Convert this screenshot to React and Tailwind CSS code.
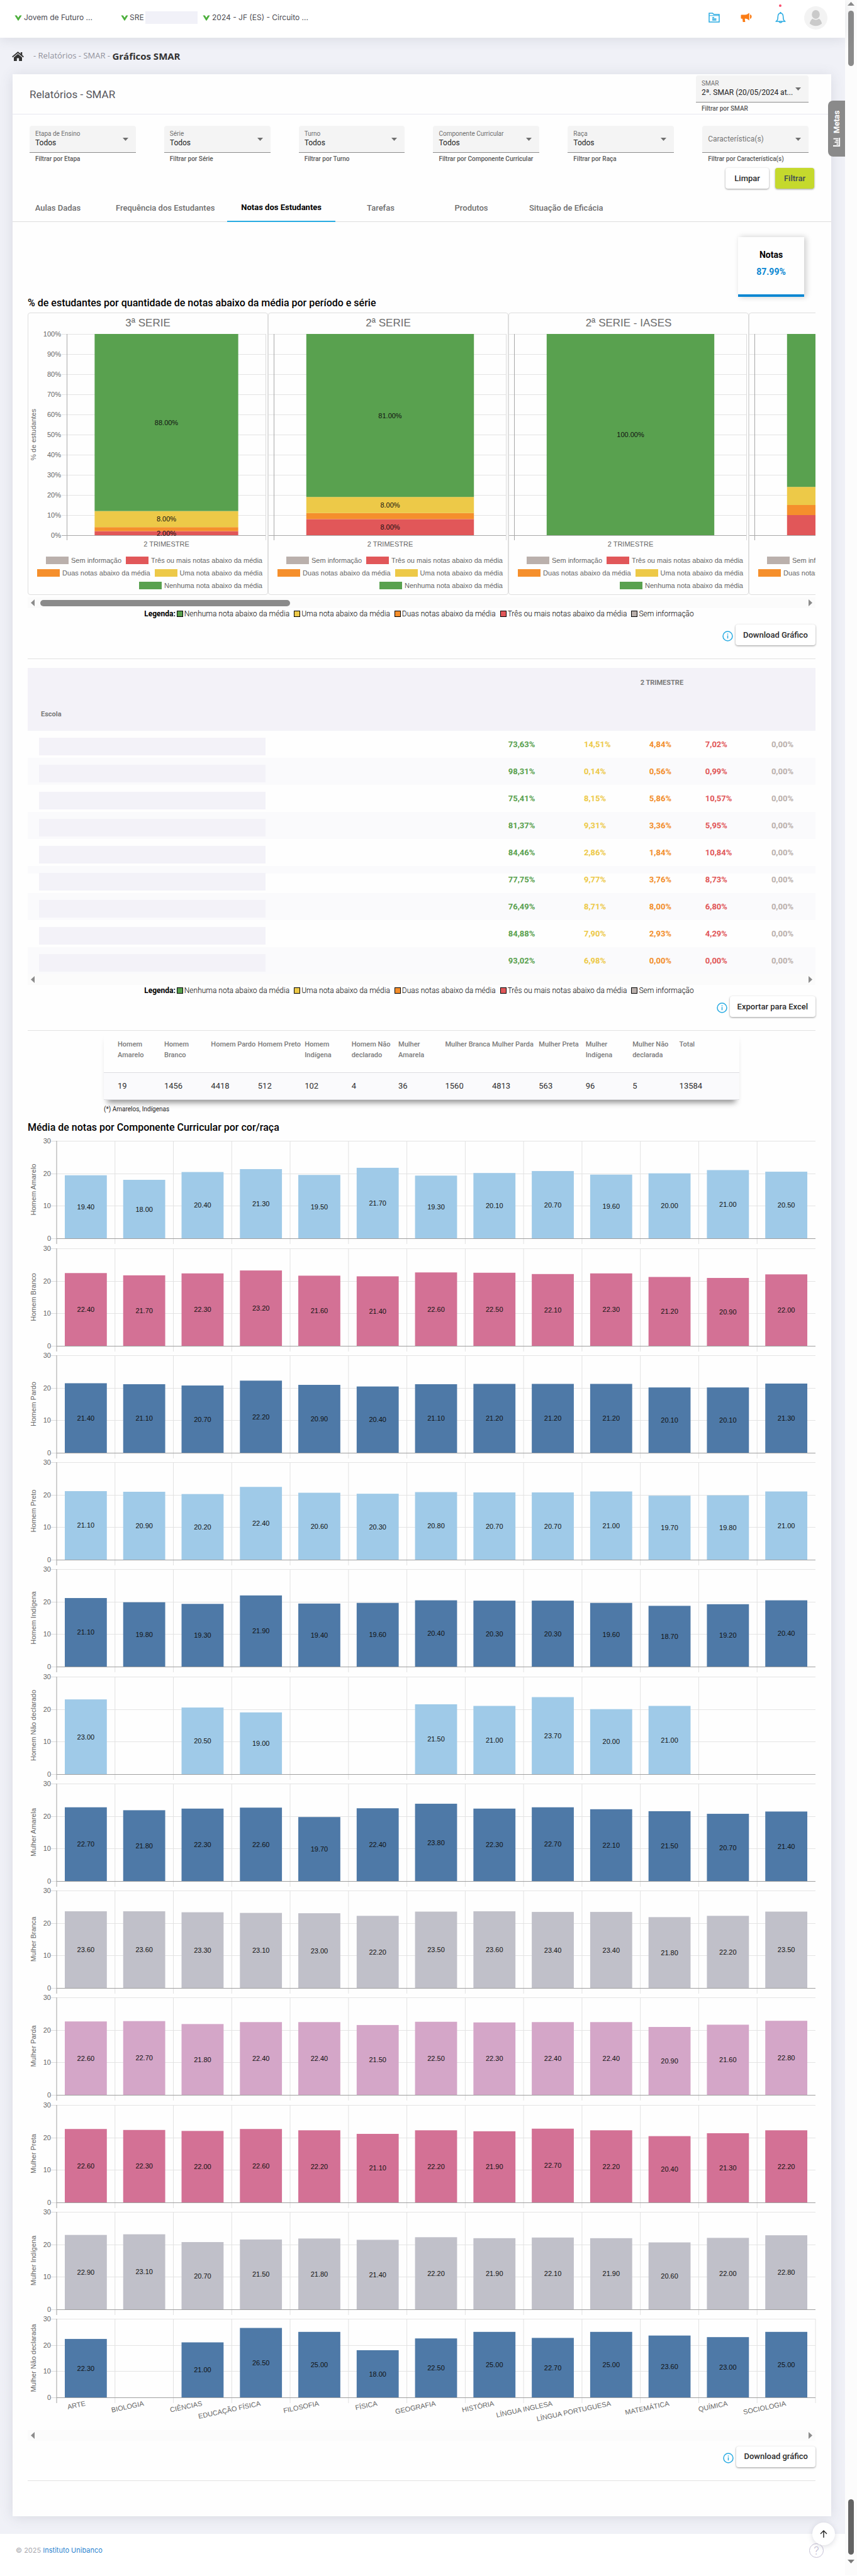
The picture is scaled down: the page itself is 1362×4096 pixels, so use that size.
import React from "react";

const roboto = "font-['Roboto',sans-serif]";

const subjects = [
  "ARTE", "BIOLOGIA", "CIÊNCIAS", "EDUCAÇÃO FÍSICA", "FILOSOFIA", "FÍSICA", "GEOGRAFIA",
  "HISTÓRIA", "LÍNGUA INGLESA", "LÍNGUA PORTUGUESA", "MATEMÁTICA", "QUÍMICA", "SOCIOLOGIA",
];

const groups = [
  { name: "Homem Amarelo", color: "#9fcae8", values: [19.4, 18.0, 20.4, 21.3, 19.5, 21.7, 19.3, 20.1, 20.7, 19.6, 20.0, 21.0, 20.5] },
  { name: "Homem Branco", color: "#d37195", values: [22.4, 21.7, 22.3, 23.2, 21.6, 21.4, 22.6, 22.5, 22.1, 22.3, 21.2, 20.9, 22.0] },
  { name: "Homem Pardo", color: "#4e79a7", values: [21.4, 21.1, 20.7, 22.2, 20.9, 20.4, 21.1, 21.2, 21.2, 21.2, 20.1, 20.1, 21.3] },
  { name: "Homem Preto", color: "#9fcae8", values: [21.1, 20.9, 20.2, 22.4, 20.6, 20.3, 20.8, 20.7, 20.7, 21.0, 19.7, 19.8, 21.0] },
  { name: "Homem Indígena", color: "#4e79a7", values: [21.1, 19.8, 19.3, 21.9, 19.4, 19.6, 20.4, 20.3, 20.3, 19.6, 18.7, 19.2, 20.4] },
  { name: "Homem Não declarado", color: "#9fcae8", values: [23.0, null, 20.5, 19.0, null, null, 21.5, 21.0, 23.7, 20.0, 21.0, null, null] },
  { name: "Mulher Amarela", color: "#4e79a7", values: [22.7, 21.8, 22.3, 22.6, 19.7, 22.4, 23.8, 22.3, 22.7, 22.1, 21.5, 20.7, 21.4] },
  { name: "Mulher Branca", color: "#c0c0c9", values: [23.6, 23.6, 23.3, 23.1, 23.0, 22.2, 23.5, 23.6, 23.4, 23.4, 21.8, 22.2, 23.5] },
  { name: "Mulher Parda", color: "#d4a6c8", values: [22.6, 22.7, 21.8, 22.4, 22.4, 21.5, 22.5, 22.3, 22.4, 22.4, 20.9, 21.6, 22.8] },
  { name: "Mulher Preta", color: "#d37195", values: [22.6, 22.3, 22.0, 22.6, 22.2, 21.1, 22.2, 21.9, 22.7, 22.2, 20.4, 21.3, 22.2] },
  { name: "Mulher Indígena", color: "#c0c0c9", values: [22.9, 23.1, 20.7, 21.5, 21.8, 21.4, 22.2, 21.9, 22.1, 21.9, 20.6, 22.0, 22.8] },
];

const lastGroup = {
  name: "Mulher Não declarada", color: "#4e79a7",
  values: [22.3, null, 21.0, 26.5, 25.0, 18.0, 22.5, 25.0, 22.7, 25.0, 23.6, 23.0, 25.0],
};

const stackColors = { red: "#e15759", orange: "#f58f2c", yellow: "#edc948", green: "#59a14f", gray: "#bab0ac" };

const stacks = [
  { title: "3ª SERIE", period: "2 TRIMESTRE", axis: true, parts: [[2, "red", "2.00%"], [2, "orange"], [8, "yellow", "8.00%"], [88, "green", "88.00%"]] },
  { title: "2ª SERIE", period: "2 TRIMESTRE", parts: [[8, "red", "8.00%"], [3, "orange"], [8, "yellow", "8.00%"], [81, "green", "81.00%"]] },
  { title: "2ª SERIE - IASES", period: "2 TRIMESTRE", parts: [[100, "green", "100.00%"]] },
  { parts: [[10, "red"], [5, "orange"], [9, "yellow"], [76, "green"]] },
];

const schools = [
  ["73,63%", "14,51%", "4,84%", "7,02%", "0,00%"],
  ["98,31%", "0,14%", "0,56%", "0,99%", "0,00%"],
  ["75,41%", "8,15%", "5,86%", "10,57%", "0,00%"],
  ["81,37%", "9,31%", "3,36%", "5,95%", "0,00%"],
  ["84,46%", "2,86%", "1,84%", "10,84%", "0,00%"],
  ["77,75%", "9,77%", "3,76%", "8,73%", "0,00%"],
  ["76,49%", "8,71%", "8,00%", "6,80%", "0,00%"],
  ["84,88%", "7,90%", "2,93%", "4,29%", "0,00%"],
  ["93,02%", "6,98%", "0,00%", "0,00%", "0,00%"],
];

const white = "bg-[#fefefe]";
const tint = "bg-[#fafafc]";
const rowTints = [white, tint, white, tint, white, "bg-[linear-gradient(#fafafc_12px,#fefefe_12px)]", tint, white, tint];
const cellColors = ["text-[#59a14f]", "text-[#edc948]", "text-[#f28e2b]", "text-[#e15759]", "text-[#bab0ac]"];

const totals = [
  ["Homem Amarelo", 19], ["Homem Branco", 1456], ["Homem Pardo", 4418], ["Homem Preto", 512],
  ["Homem Indígena", 102], ["Homem Não declarado", 4], ["Mulher Amarela", 36], ["Mulher Branca", 1560],
  ["Mulher Parda", 4813], ["Mulher Preta", 563], ["Mulher Indígena", 96], ["Mulher Não declarada", 5], ["Total", 13584],
];
const oneLine = /Pardo|Preto|Branca|Parda|Preta/;

function Chevron() {
  return (
    <svg width="12" height="9" viewBox="0 0 12 9" className="shrink-0" aria-hidden="true">
      <path d="M0.4 0.6H3.6L6 4.2L8.4 0.6H11.6L6.6 8.4Q6 9 5.4 8.4Z" fill="#4caf3c" />
    </svg>
  );
}

function Header() {
  return (
    <header className="relative flex h-[60px] items-center bg-white shadow-[0_2px_20px_rgba(70,75,100,0.14)]">
      <nav className="flex flex-1 items-center pl-[23px] pb-1 text-[12px] leading-5 text-[#4b4b52] font-['Inter',sans-serif]">
        <button className="flex w-[169px] items-center gap-[3px] whitespace-nowrap"><Chevron />Jovem de Futuro ...</button>
        <button className="flex w-[130px] items-center gap-[2px] whitespace-nowrap">
          <Chevron />SRE<span className="h-5 w-[83px] bg-[#f1f1f8]" />
        </button>
        <button className="flex items-center gap-[3px] whitespace-nowrap"><Chevron />2024 - JF (ES) - Circuito ...</button>
      </nav>
      <div className="flex items-center pr-7 pb-1">
        <button aria-label="Documentos" className="mr-[33px]">
          <svg width="18" height="16" viewBox="0 0 18 16" fill="none" stroke="#29abe2" strokeWidth="1.5">
            <path d="M1 15V1H6.5L8.5 3H17V15Z" /><path d="M1 4.8H17" strokeWidth="1" />
            <path d="M6 7.8H9M6 9.9H12.5M6 12H12.5" />
          </svg>
        </button>
        <button aria-label="Avisos" className="mr-[37px]">
          <svg width="18" height="16" viewBox="0 0 18 16" fill="#fb7c16">
            <path d="M0.5 4.2Q0.5 3.4 1.3 3.4H7.5Q10.5 3.2 13.8 0.4V12.6Q10.5 9.8 7.5 9.6L6.7 9.9L7.4 15H3.6L3 9.7H1.3Q0.5 9.7 0.5 8.9Z" />
            <path d="M15 3Q17.6 3.6 17.6 6.5T15 10Z" />
          </svg>
        </button>
        <button aria-label="Notificações" className="relative mr-[29px]">
          <svg width="17" height="18" viewBox="0 0 17 18" fill="none" stroke="#29abe2" strokeWidth="1.5">
            <path d="M3 13.5Q4.3 12 4.3 7.5Q4.5 2 8.5 2Q12.5 2 12.7 7.5Q12.7 12 14 13.5Q15.5 14.5 15.7 15H1.3Q1.5 14.5 3 13.5Z" />
            <path d="M6 15.4Q8.5 18.4 11 15.4M7.5 2L8.5 0.6L9.5 2" />
          </svg>
          <span className="absolute -top-[12px] left-[6px] size-1 rounded-full bg-[#fb4d6d]" />
        </button>
        <button aria-label="Perfil" className="size-[37px] rounded-full bg-[#f3f3f3]">
          <svg width="37" height="37" viewBox="0 0 37 37" fill="#cacaca">
            <ellipse cx="18.5" cy="13" rx="6.3" ry="7" />
            <path d="M13.3 19.8Q18.5 23 23.7 19.8Q27 22 28.2 27.5Q24 31.2 18.5 31.2T8.8 27.5Q10 22 13.3 19.8Z" />
          </svg>
        </button>
      </div>
    </header>
  );
}

function SelectField({ id, label, value, helper }) {
  return (
    <div className="min-w-0">
      <div className="relative h-[43px] rounded-t border-b border-[#8c8c8c] bg-[#f4f4f4]">
        {label && <label htmlFor={id} className="absolute left-[9px] top-[7px] text-[10px] leading-3 text-[#6f6f6f]">{label}</label>}
        <select
          id={id}
          aria-label={label ? undefined : value}
          className={label
            ? "h-full w-full appearance-none pl-[9px] pt-3 text-[12px] text-[#222] outline-none"
            : "h-full w-full appearance-none pl-[9px] text-[12px] text-[#777] outline-none"}
        >
          <option>{value}</option>
        </select>
        <svg width="9" height="5" className="pointer-events-none absolute right-3 top-[19px]" aria-hidden="true"><path d="M0 0H9L4.5 5Z" fill="#6f6f6f" /></svg>
      </div>
      <p className="mt-1 pl-[9px] text-[10px] font-medium leading-3 text-[#5a5a5a]">{helper}</p>
    </div>
  );
}

function StackLegend() {
  const rows = [
    [["gray", "Sem informação"], ["red", "Três ou mais notas abaixo da média"]],
    [["orange", "Duas notas abaixo da média"], ["yellow", "Uma nota abaixo da média"]],
    [["green", "Nenhuma nota abaixo da média"]],
  ];
  return (
    <div className="flex flex-col gap-1 pr-2 text-[11px] leading-4 text-[#666]">
      {rows.map((r, i) => (
        <div key={i} className="flex justify-end gap-[7px]">
          {r.map(([c, t]) => (
            <span key={t} className="flex items-center gap-1 whitespace-nowrap">
              <span className="h-3 w-9" style={{ backgroundColor: stackColors[c] }} />{t}
            </span>
          ))}
        </div>
      ))}
    </div>
  );
}

function StackChart({ chart }) {
  const left = chart.axis ? 61 : 8;
  const right = 378;
  const w = right - left;
  const top = 33;
  const h = 320;
  const cx = left + w / 2;
  const bw = w * 0.72;
  let acc = 0;
  const segs = chart.parts.map(([v, c, t]) => {
    const s = { y: top + h * (1 - (acc + v) / 100), sh: (h * v) / 100, c, t };
    acc += v;
    return s;
  });
  return (
    <div className="h-[449px] w-[382px] shrink-0 rounded border border-[#dedede] font-['Liberation_Sans',Arial,sans-serif]">
      <svg width="380" height="385" className="block">
        {chart.title && <text x="190" y="21" textAnchor="middle" fontSize="17" fill="#6c6c6c">{chart.title}</text>}
        {Array.from({ length: 11 }, (_, i) => (
          <g key={i}>
            <line x1={left - 8} x2={right} y1={top + i * 32 + 0.5} y2={top + i * 32 + 0.5} stroke={i === 10 ? "#a8a8a8" : "#e4e4e4"} />
            {chart.axis && <text x="52" y={top + i * 32 + 4} textAnchor="end" fontSize="11" fill="#666">{100 - i * 10}%</text>}
          </g>
        ))}
        <line x1={left + 0.5} x2={left + 0.5} y1={top} y2={top + h + 8} stroke="#a8a8a8" />
        <line x1={right - 0.5} x2={right - 0.5} y1={top} y2={top + h + 8} stroke="#dcdcdc" />
        {segs.map((s, i) => <rect key={i} x={cx - bw / 2} y={s.y} width={bw} height={s.sh} fill={stackColors[s.c]} />)}
        {segs.map((s, i) => s.t && <text key={i} x={cx} y={s.y + s.sh / 2 + 4} textAnchor="middle" fontSize="11" fill="#111">{s.t}</text>)}
        {chart.period && <text x={cx} y="371" textAnchor="middle" fontSize="11" fill="#666">{chart.period}</text>}
        {chart.axis && <text transform="translate(12 193) rotate(-90)" textAnchor="middle" fontSize="11" fill="#666">% de estudantes</text>}
      </svg>
      <StackLegend />
    </div>
  );
}

function ScrollBar({ thumb }) {
  return (
    <div className="flex h-[17px] items-center bg-[#fbfbfb] px-[5px]" aria-hidden="true">
      <svg width="6" height="11"><path d="M6 0V11L0 5.5Z" fill="#8b8b8b" /></svg>
      <div className="mx-[9px] flex-1">{thumb && <div className="h-[10px] w-[397px] rounded-full bg-[#8b8b8b]" />}</div>
      <svg width="6" height="11"><path d="M0 0V11L6 5.5Z" fill="#8b8b8b" /></svg>
    </div>
  );
}

function Legend() {
  const items = [
    ["Nenhuma nota abaixo da média", "bg-[#59a14f]"], ["Uma nota abaixo da média", "bg-[#edc948]"],
    ["Duas notas abaixo da média", "bg-[#f58f2c]"], ["Três ou mais notas abaixo da média", "bg-[#e15759]"],
    ["Sem informação", "bg-[#bab0ac]"],
  ];
  return (
    <div className="flex h-[17px] items-center justify-center pr-2 text-[12px] font-light leading-4 text-black">
      <b className="mr-[2px] font-bold">Legenda:</b>
      {items.map(([t, c], i) => (
        <span key={t} className={i ? "ml-[7px] flex items-center gap-[2px]" : "flex items-center gap-[2px]"}>
          <span className={`size-[10px] border border-black ${c}`} />{t}
        </span>
      ))}
    </div>
  );
}

function ActionRow({ children, className }) {
  return (
    <div className={`flex items-center justify-end gap-1 ${className}`}>
      <button aria-label="Informações" className="pt-1">
        <svg width="17" height="17" viewBox="0 0 17 17" fill="none" stroke="#29abe2" strokeWidth="1.5">
          <circle cx="8.5" cy="8.5" r="7.5" /><path d="M8.5 7.3V12.3M8.5 4.6V6.1" />
        </svg>
      </button>
      <button className="h-[33px] rounded bg-white px-3 text-[13px] font-medium text-[#2b2b2b] shadow-[0_1px_3px_rgba(0,0,0,0.4)]">{children}</button>
    </div>
  );
}

function BarPanel({ group, plot, height, labels, className }) {
  const n = group.values.length;
  const pct = (v) => `${(v * 100) / n}%`;
  const top = 10;
  const zero = top + plot;
  return (
    <div className={`flex ${className}`}>
      <svg width="46" height={height} className="block shrink-0 overflow-visible" fontSize="11" fill="#666">
        <text transform={`translate(13 ${top + plot / 2}) rotate(-90)`} textAnchor="middle">{group.name}</text>
        {[30, 20, 10, 0].map((t) => {
          const y = zero - (plot * t) / 30;
          return (
            <g key={t}>
              <text x="37" y={y + 4} textAnchor="end">{t}</text>
              <line x1="37" x2="46" y1={Math.round(y) + 0.5} y2={Math.round(y) + 0.5} stroke="#dcdcdc" />
            </g>
          );
        })}
      </svg>
      <div className="min-w-0 flex-1">
        <svg width="100%" height={height} className="block overflow-visible" fontSize="11">
          {[30, 20, 10].map((t) => {
            const y = Math.round(zero - (plot * t) / 30) + 0.5;
            return <line key={t} x1="0" x2="100%" y1={y} y2={y} stroke="#e4e4e4" />;
          })}
          {group.values.map((v, i) => (
            <line key={i} x1={pct(i)} x2={pct(i)} y1={top} y2={zero + 9} stroke={i ? "#e2e2e2" : "#a0a0a0"} />
          ))}
          {labels && <line x1="100%" x2="100%" y1={top} y2={zero + 9} stroke="#e2e2e2" />}
          <line x1="0" x2="100%" y1={zero + 0.5} y2={zero + 0.5} stroke="#a0a0a0" />
          {group.values.map((v, i) => v && (
            <g key={i}>
              <rect x={pct(i + 0.14)} width={pct(0.72)} y={zero - (plot * v) / 30} height={(plot * v) / 30} fill={group.color} />
              <text x={pct(i + 0.5)} y={zero - (plot * v) / 60 + 4} textAnchor="middle" fill="#111">{v.toFixed(2)}</text>
            </g>
          ))}
          {labels && subjects.map((s, i) => (
            <svg key={s} x={pct(i + 0.5)} y={zero + 13} overflow="visible">
              <text transform="rotate(-12)" textAnchor="end" fill="#666">{s}</text>
            </svg>
          ))}
        </svg>
      </div>
    </div>
  );
}

function SchoolTable() {
  return (
    <table className="mt-[14px] w-full table-fixed text-left">
      <colgroup>
        <col className="w-[61%]" /><col className="w-[9.6%]" /><col className="w-[8.3%]" />
        <col className="w-[7.1%]" /><col className="w-[8.4%]" /><col className="w-[5.6%]" />
      </colgroup>
      <thead className="bg-[#f3f2f8] text-[11px] text-[#7a7a7a]">
        <tr className="h-[49px]">
          <th />
          <th colSpan="5" className="text-center font-bold">2 TRIMESTRE</th>
        </tr>
        <tr className="h-[51px]">
          <th className="pl-[21px] font-bold">Escola</th>
          <th colSpan="5" />
        </tr>
      </thead>
      <tbody>
        {schools.map((r, i) => (
          <tr key={i} className={`h-[43px] ${rowTints[i]}`}>
            <td className="pl-[18px] pt-[6px]"><div className="h-7 w-[360px] bg-[#f3f2f8]" /></td>
            {r.map((v, k) => <td key={k} className={`text-[13px] font-bold ${cellColors[k]}`}>{v}</td>)}
          </tr>
        ))}
      </tbody>
    </table>
  );
}

function TotalsTable() {
  return (
    <div className="mx-[121px]">
      <table className="w-full table-fixed text-left shadow-[0_10px_9px_-6px_rgba(0,0,0,0.45)]">
        <colgroup>
          <col className="w-[9.5%]" />
          {totals.slice(2).map((t) => <col key={t[0]} className="w-[7.37%]" />)}
          <col />
        </colgroup>
        <thead>
          <tr className="h-[66px] bg-[#fefefe] align-top text-[11px] leading-[17px] text-[#7a7a7a]">
            {totals.map(([t], i) => (
              <th key={t} className={i ? "pt-[13px] font-medium" : "pl-[22px] pt-[13px] font-medium"}>
                <span className={oneLine.test(t) ? "whitespace-nowrap" : "block"}>{t}</span>
              </th>
            ))}
          </tr>
        </thead>
        <tbody>
          <tr className="h-[43px] border-y border-[#dcdce0] bg-[#fafafc] text-[13px] text-[#2f2f2f]">
            {totals.map(([t, v], i) => <td key={t} className={i ? "" : "pl-[22px]"}>{v}</td>)}
          </tr>
        </tbody>
      </table>
      <p className="mt-2 text-[10px] leading-[14px] text-[#222]">(*) Amarelos, Indígenas</p>
    </div>
  );
}

const tabs = ["Aulas Dadas", "Frequência dos Estudantes", "Notas dos Estudantes", "Tarefas", "Produtos", "Situação de Eficácia"];

export default function App() {
  return (
    <div className={`flex bg-[#f0f1f7] ${roboto}`}>
      <div className="relative min-w-0 flex-1">
        <Header />
        <nav className="flex h-[58px] items-center pl-[19px] text-[#92929c] font-['Open_Sans',sans-serif]">
          <a href="#" aria-label="Início" className="mr-[15px]">
            <svg width="19" height="15" viewBox="0 0 19 15" fill="#333" aria-hidden="true">
              <path d="M9.5 0L0 8L1.3 9.3L9.5 2.6L17.7 9.3L19 8L16.3 5.6V1H13.8V3.5Z" />
              <path d="M9.5 3.8L3 9.2V15H7.8V10.5H11.2V15H16V9.2Z" />
            </svg>
          </a>
          <span className="text-[13px]">- Relatórios - SMAR -&nbsp;</span>
          <b className="text-[15px] font-bold text-[#333]">Gráficos SMAR</b>
        </nav>

        <main className="relative ml-5 mr-[22px] bg-[#fefefe] pb-14 shadow-[0_2px_20px_rgba(70,75,100,0.14)]">
          <div className="flex h-16 items-start justify-between border-b border-[#e8e8f0] pl-[27px] pr-9">
            <h1 className="pt-5 text-[17px] leading-6 text-[#56565c]">Relatórios - SMAR</h1>
            <div className="w-[179px] pt-[2px]">
              <SelectField id="smar" label="SMAR" value="2ª. SMAR (20/05/2024 at..." helper="Filtrar por SMAR" />
            </div>
          </div>

          <form className="pl-[27px] pr-9 pt-[18px]">
            <div className="grid grid-cols-6 gap-x-[45px]">
              <SelectField id="etapa" label="Etapa de Ensino" value="Todos" helper="Filtrar por Etapa" />
              <SelectField id="serie" label="Série" value="Todos" helper="Filtrar por Série" />
              <SelectField id="turno" label="Turno" value="Todos" helper="Filtrar por Turno" />
              <SelectField id="comp" label="Componente Curricular" value="Todos" helper="Filtrar por Componente Curricular" />
              <SelectField id="raca" label="Raça" value="Todos" helper="Filtrar por Raça" />
              <SelectField id="carac" value="Característica(s)" helper="Filtrar por Característica(s)" />
            </div>
            <div className="-mr-[9px] mt-2 flex justify-end gap-[10px]">
              <button type="button" className="h-[33px] rounded bg-white px-[14px] text-[13px] font-medium text-[#2b2b2b] shadow-[0_1px_3px_rgba(0,0,0,0.4)]">Limpar</button>
              <button type="button" className="h-[33px] rounded bg-[#c5d92d] px-[14px] text-[13px] font-medium text-[#3c4a57] shadow-[0_1px_3px_rgba(0,0,0,0.4)]">Filtrar</button>
            </div>
          </form>

          <div className="mt-[9px] flex h-11 border-b border-[#dedede]" role="tablist">
            {tabs.map((t) => (
              <button key={t} role="tab" aria-selected={t === tabs[2]}
                className={t === tabs[2]
                  ? "-mb-px min-w-[144px] border-b-2 border-[#29abe2] px-[22px] text-[13px] font-bold text-black"
                  : "min-w-[144px] px-5 text-[13px] font-medium text-[#6e6e6e]"}>
                {t}
              </button>
            ))}
          </div>

          <div className="pl-6 pr-[25px]">
            <div className="flex justify-end pr-[18px] pt-6">
              <div className="flex h-[95px] w-[105px] flex-col items-center gap-[7px] border-b-4 border-[#0a87d2] bg-[#fefefe] pt-[18px] text-[14px] font-bold leading-5 text-black shadow-[3px_0_9px_rgba(0,0,0,0.2)]">
                <span>Notas</span>
                <span className="text-[#0a87d2]">87.99%</span>
              </div>
            </div>
            <h2 className="text-[16px] font-medium leading-5 text-black">% de estudantes por quantidade de notas abaixo da média por período e série</h2>
            <div className="mt-[5px] flex overflow-hidden">
              {stacks.map((c, i) => <StackChart key={i} chart={c} />)}
            </div>
            <div className="mt-1"><ScrollBar thumb /></div>
            <Legend />
            <ActionRow className="mt-[9px]">Download Gráfico</ActionRow>

            <hr className="mt-[21px] border-[#e2e2e2]" />
            <SchoolTable />
            <ScrollBar />
            <Legend />
            <ActionRow className="mt-px">Exportar para Excel</ActionRow>

            <hr className="mt-[21px] border-[#e2e2e2]" />
            <TotalsTable />
            <h2 className="mt-3 text-[16px] font-medium leading-5 text-black">Média de notas por Componente Curricular por cor/raça</h2>
            <div className="mt-px font-['Liberation_Sans',Arial,sans-serif]">
              {groups.map((g) => <BarPanel key={g.name} group={g} plot={155} height={170} className="[&:nth-child(4n+1)]:mb-px" />)}
              <BarPanel group={lastGroup} plot={125} height={187} labels className="" />
            </div>
            <ScrollBar />
            <ActionRow className="mt-[9px]">Download gráfico</ActionRow>
            <hr className="mt-[21px] border-[#e2e2e2]" />
          </div>
        </main>

        <footer className="relative mt-7 flex h-[66px] items-center justify-between bg-white pb-3 pl-[25px] pr-[34px] font-['Inter',sans-serif] text-[11px] text-[#a8a8ae]">
          <p>© 2025 <a href="#" className="text-[#2e86d0]">Instituto Unibanco</a></p>
          <button aria-label="Ajuda" className="size-[23px] rounded-full border border-[#c5c0d5] text-[17px] font-light leading-5 text-[#c5c0d5]">?</button>
          <button aria-label="Voltar ao topo" className="absolute -top-[18px] right-4 flex size-9 items-center justify-center rounded-full bg-white shadow-[0_2px_8px_rgba(60,60,90,0.18)]">
            <svg width="12" height="12" viewBox="0 0 12 12" fill="none" stroke="#222" strokeWidth="1.4"><path d="M6 12V1M1 6L6 1L11 6" /></svg>
          </button>
        </footer>

        <button className="absolute right-0 top-[160px] flex h-[89px] w-[27px] rotate-180 items-center justify-center gap-[7px] rounded-r-lg bg-[#8a8a8a] text-[13px] font-bold text-white [writing-mode:vertical-rl]">
          <svg width="14" height="14" viewBox="0 0 14 14" fill="none" stroke="#fff" strokeWidth="1.8" className="shrink-0 rotate-90" aria-hidden="true">
            <path d="M1 2V12.2H14" /><path d="M4 10.5V7.5M6.8 10.5V4.5M9.6 10.5V6M12.4 10.5V2.5" />
          </svg>
          Metas
        </button>
      </div>

      <aside className="flex w-[19px] shrink-0 flex-col items-center bg-[#fcfcfc] pb-[19px] pt-[3px]" aria-hidden="true">
        <svg width="11" height="6"><path d="M0 6H11L5.5 0Z" fill="#8b8b8b" /></svg>
        <div className="mt-2 h-[88px] w-[9px] rounded-full bg-[#8b8b8b]" />
        <div className="flex-1" />
        <div className="mb-2 h-[88px] w-[9px] rounded-full bg-[#636363]" />
        <svg width="11" height="6"><path d="M0 0H11L5.5 6Z" fill="#7d7d7d" /></svg>
      </aside>
    </div>
  );
}
